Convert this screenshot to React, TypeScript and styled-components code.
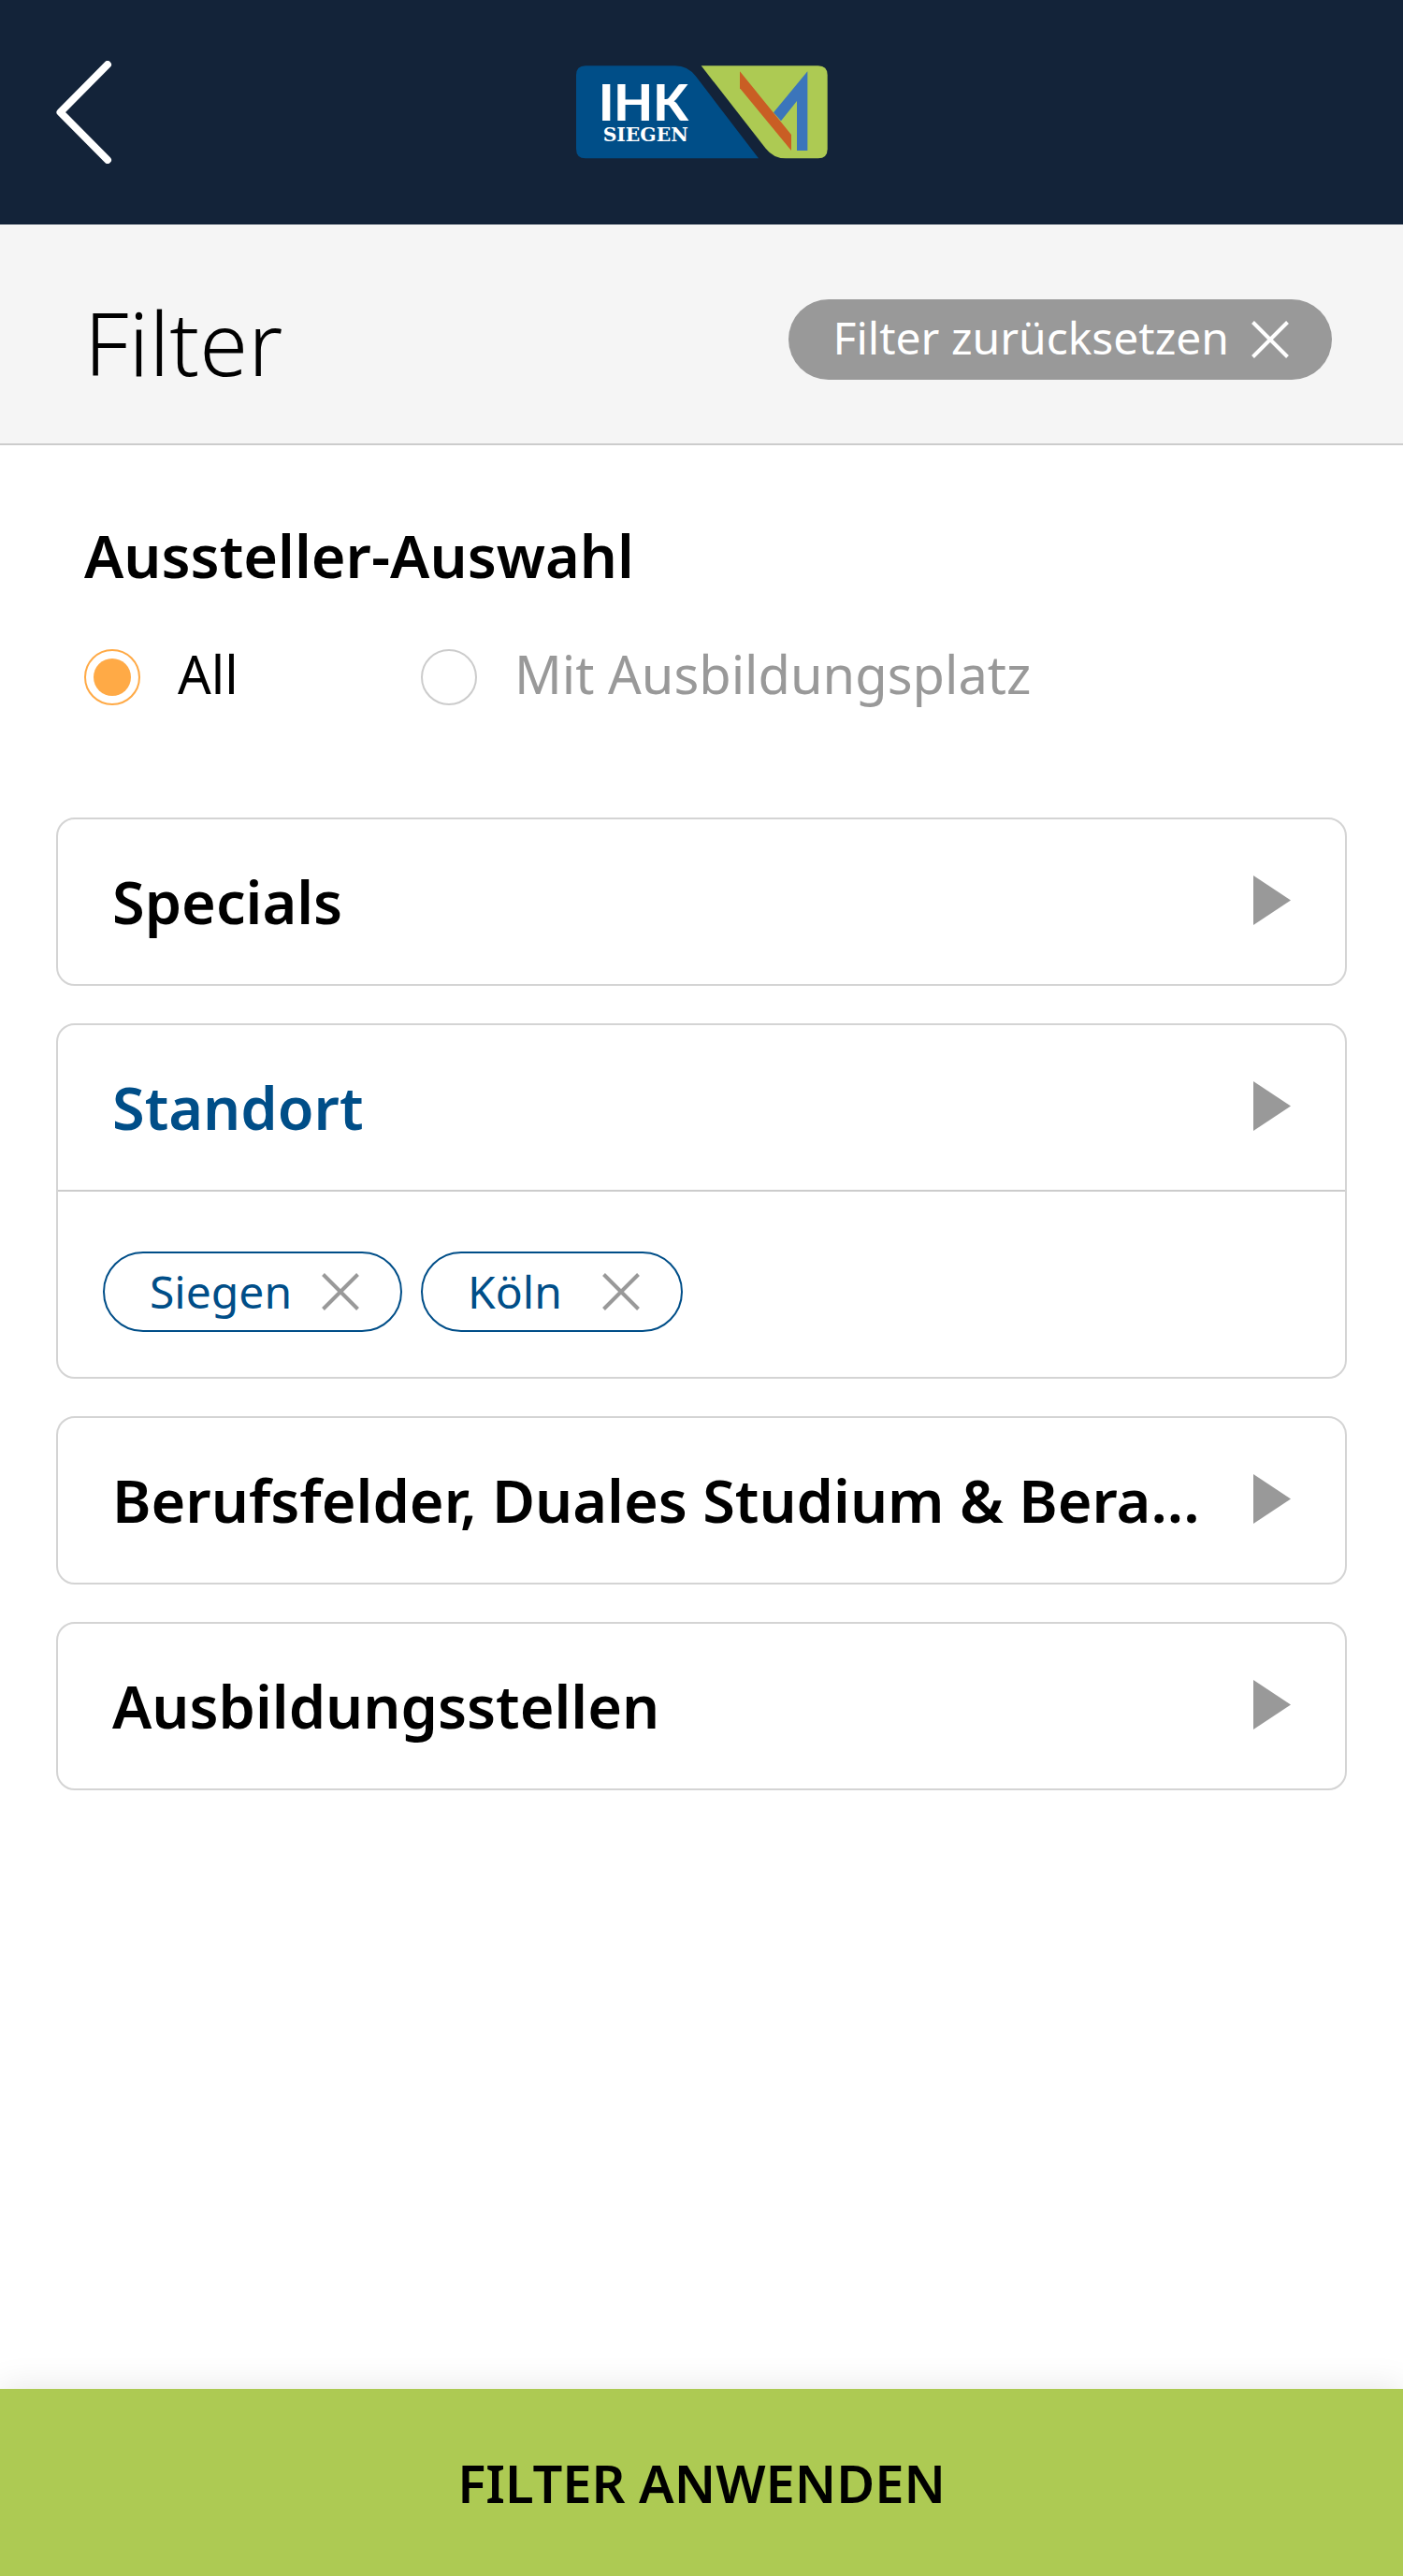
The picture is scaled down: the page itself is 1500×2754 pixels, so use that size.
import React, { useState } from "react";
import styled, { createGlobalStyle } from "styled-components";

const color = {
  navy: "#132339",
  blue: "#004e88",
  green: "#adca53",
  orange: "#ffaa46",
  grey: "#999999",
  line: "#cccccc",
  cardLine: "#d4d4d4",
  band: "#f5f5f5",
};

const GlobalStyle = createGlobalStyle`
  *, *::before, *::after { box-sizing: border-box; }
  body {
    margin: 0;
    background: #fff;
    color: #000;
    font-family: "Noto Sans", "Open Sans", sans-serif;
  }
  button {
    margin: 0;
    padding: 0;
    border: 0;
    background: none;
    color: inherit;
    font: inherit;
    cursor: pointer;
  }
  svg { display: block; flex: none; }
`;

const Page = styled.div`
  display: flex;
  flex-direction: column;
  min-height: 100vh;
`;

const TopBar = styled.header`
  display: grid;
  grid-template-columns: 1fr auto 1fr;
  align-items: center;
  height: 240px;
  padding: 0 60px;
  background: ${color.navy};
`;

const BackButton = styled.button`
  justify-self: start;
`;

const TitleBand = styled.div`
  display: flex;
  align-items: flex-start;
  justify-content: space-between;
  padding: 80px 76px 62px 90px;
  border-bottom: 2px solid ${color.line};
  background: ${color.band};
`;

const Title = styled.h1`
  margin: 0;
  font-size: 94px;
  font-weight: 300;
  line-height: 92px;
`;

const ResetButton = styled.button`
  display: flex;
  align-items: center;
  gap: 24px;
  height: 86px;
  padding: 0 46px 0 48px;
  border-radius: 43px;
  background: ${color.grey};
  color: #fff;
  font-size: 48px;
  line-height: 60px;
`;

const ResetLabel = styled.span`
  padding-bottom: 4px;
`;

const Content = styled.main`
  flex: 1;
  padding: 76px 60px 60px;
`;

const Choice = styled.fieldset`
  margin: 0 0 120px;
  padding: 0 30px;
  border: 0;
`;

const ChoiceTitle = styled.legend`
  margin-bottom: 58px;
  padding: 0;
  font-size: 63px;
  font-weight: 600;
  line-height: 84px;
`;

const Options = styled.div`
  display: grid;
  grid-template-columns: 360px auto;
  justify-content: start;
`;

const Option = styled.label`
  display: flex;
  align-items: flex-start;
  gap: 40px;
  height: 60px;
  font-size: 56px;
  line-height: 52px;
  color: ${color.grey};
  cursor: pointer;

  &:has(input:checked) { color: #000; }
`;

const Radio = styled.input`
  appearance: none;
  flex: none;
  width: 60px;
  height: 60px;
  margin: 0;
  padding: 8px;
  border: 2px solid ${color.line};
  border-radius: 50%;
  background-clip: content-box;

  &:checked {
    border-color: ${color.orange};
    background-color: ${color.orange};
  }
`;

const CardList = styled.div`
  display: flex;
  flex-direction: column;
  gap: 40px;
`;

const Card = styled.section`
  border: 2px solid ${color.cardLine};
  border-radius: 20px;
`;

const CardHeader = styled.button<{ $active: boolean }>`
  display: flex;
  align-items: center;
  justify-content: space-between;
  gap: 40px;
  width: 100%;
  height: 176px;
  padding: 0 58px;
  color: ${(p) => (p.$active ? color.blue : "#000")};
  text-align: left;
`;

const CardTitle = styled.span`
  overflow: hidden;
  font-size: 63px;
  font-weight: 600;
  line-height: 84px;
  text-overflow: ellipsis;
  white-space: nowrap;
`;

const ChipRow = styled.div`
  display: flex;
  flex-wrap: wrap;
  gap: 20px;
  padding: 64px 48px 48px;
  border-top: 2px solid ${color.line};
`;

const Chip = styled.button`
  display: flex;
  align-items: center;
  justify-content: space-between;
  gap: 32px;
  min-width: 280px;
  height: 86px;
  padding: 0 44px 0 48px;
  border: 2px solid ${color.blue};
  border-radius: 43px;
  color: ${color.blue};
  font-size: 48px;
  line-height: 60px;
`;

const ApplyButton = styled.button`
  position: sticky;
  bottom: 0;
  width: 100%;
  height: 200px;
  background: ${color.green};
  box-shadow: 0 0 36px rgba(0, 0, 0, 0.11);
  color: #000;
  font-size: 56px;
  font-weight: 600;
  line-height: 60px;
  text-transform: uppercase;
`;

function BackIcon() {
  return (
    <svg width="60" height="110" viewBox="0 0 60 110" aria-hidden="true">
      <path
        d="M55 4 4.500 55 55 106"
        fill="none"
        stroke="#fff"
        strokeWidth="8"
        strokeLinecap="round"
        strokeLinejoin="round"
      />
    </svg>
  );
}

function CrossIcon({ stroke }: { stroke: string }) {
  return (
    <svg width="40" height="40" viewBox="0 0 40 40" aria-hidden="true">
      <path d="M1.500 1.500 38.500 38.500M38.500 1.500 1.500 38.500" fill="none" stroke={stroke} strokeWidth="4" />
    </svg>
  );
}

function ArrowIcon() {
  return (
    <svg width="40" height="56" viewBox="0 0 40 56" aria-hidden="true">
      <path d="M0 0 40 26.500 0 53Z" fill={color.grey} />
    </svg>
  );
}

function Logo() {
  return (
    <svg width="269" height="100" viewBox="78 60 807 300" role="img" aria-label="IHK Siegen">
      <path
        d="M108 61H395Q437 61 463 96L663 358H108Q78 358 78 328V91Q78 61 108 61Z"
        fill={color.blue}
      />
      <path
        d="M479 61H854Q884 61 884 91V328Q884 358 854 358H750Q711 358 686 326Z"
        fill={color.green}
      />
      <path d="M820 79V333H786V174L735 238 711 211Z" fill="#3b75bb" />
      <path d="M603 79 768 282V333L603 133Z" fill="#c95e24" />
      <text fill="#fff">
        <tspan x="150" y="236" fontFamily="Lato, sans-serif" fontSize="162" fontWeight="900">
          IHK
        </tspan>
        <tspan x="164" y="302" fontFamily='"DejaVu Serif", serif' fontSize="61" fontWeight="700">
          SIEGEN
        </tspan>
      </text>
    </svg>
  );
}

const exhibitors = ["All", "Mit Ausbildungsplatz"];

const groups = [
  { id: "specials", title: "Specials" },
  { id: "standort", title: "Standort" },
  { id: "berufsfelder", title: "Berufsfelder, Duales Studium & Bera..." },
  { id: "stellen", title: "Ausbildungsstellen" },
];

export default function App() {
  const [exhibitor, setExhibitor] = useState("All");
  const [places, setPlaces] = useState(["Siegen", "Köln"]);

  const reset = () => {
    setExhibitor("All");
    setPlaces([]);
  };

  return (
    <Page>
      <GlobalStyle />
      <TopBar>
        <BackButton type="button" aria-label="Zurück">
          <BackIcon />
        </BackButton>
        <Logo />
      </TopBar>

      <TitleBand>
        <Title>Filter</Title>
        <ResetButton type="button" onClick={reset}>
          <ResetLabel>Filter zurücksetzen</ResetLabel>
          <CrossIcon stroke="#fff" />
        </ResetButton>
      </TitleBand>

      <Content>
        <Choice>
          <ChoiceTitle>Aussteller-Auswahl</ChoiceTitle>
          <Options>
            {exhibitors.map((name) => (
              <Option key={name}>
                <Radio
                  type="radio"
                  name="aussteller"
                  checked={exhibitor === name}
                  onChange={() => setExhibitor(name)}
                />
                {name}
              </Option>
            ))}
          </Options>
        </Choice>

        <CardList>
          {groups.map(({ id, title }) => {
            const chips = id === "standort" ? places : [];
            return (
              <Card key={id}>
                <CardHeader type="button" $active={chips.length > 0}>
                  <CardTitle>{title}</CardTitle>
                  <ArrowIcon />
                </CardHeader>
                {chips.length > 0 && (
                  <ChipRow>
                    {chips.map((place) => (
                      <Chip
                        key={place}
                        type="button"
                        onClick={() => setPlaces(places.filter((p) => p !== place))}
                      >
                        {place}
                        <CrossIcon stroke={color.grey} />
                      </Chip>
                    ))}
                  </ChipRow>
                )}
              </Card>
            );
          })}
        </CardList>
      </Content>

      <ApplyButton type="button">Filter anwenden</ApplyButton>
    </Page>
  );
}
